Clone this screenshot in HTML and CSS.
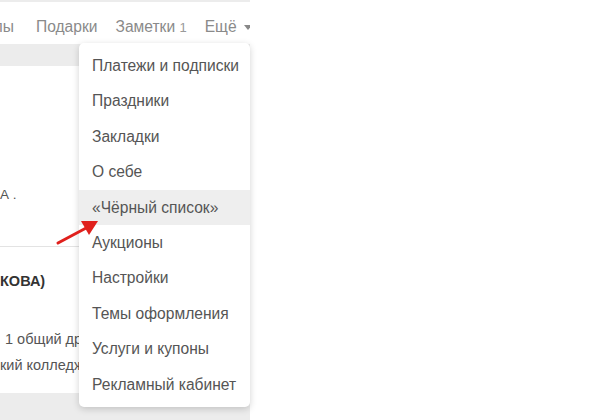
FILE: index.html
```
<!DOCTYPE html>
<html lang="ru">
<head>
<meta charset="utf-8">
<link rel="stylesheet" href="styles.css">
</head>
<body>
<div class="page">
  <nav class="nav">
    <a class="nav-item first">Группы</a>
    <a class="nav-item">Подарки</a>
    <a class="nav-item">Заметки <span class="count">1</span></a>
    <a class="nav-item more">Ещё <span class="caret"></span></a>
  </nav>
  <div class="card">
    <div class="block top">
      <div class="line name-a">А .</div>
    </div>
    <div class="block bottom">
      <div class="line bold">КОВА)</div>
      <div class="line info friends">1 общий друг</div>
      <div class="line info">кий колледж</div>
    </div>
  </div>
</div>

<ul class="menu">
  <li class="menu-item">Платежи и подписки</li>
  <li class="menu-item">Праздники</li>
  <li class="menu-item">Закладки</li>
  <li class="menu-item">О себе</li>
  <li class="menu-item active">«Чёрный список»</li>
  <li class="menu-item">Аукционы</li>
  <li class="menu-item">Настройки</li>
  <li class="menu-item">Темы оформления</li>
  <li class="menu-item">Услуги и купоны</li>
  <li class="menu-item">Рекламный кабинет</li>
</ul>

<svg class="arrow" width="60" height="40" viewBox="0 0 60 40">
  <line x1="6" y1="32" x2="36" y2="16" stroke="#e0201c" stroke-width="3" stroke-linecap="round"/>
  <polygon points="46,10 29,10 37,24" fill="#e0201c"/>
</svg>
</body>
</html>
```
FILE: styles.css
```
html, body {
  margin: 0;
  padding: 0;
  background: #fff;
  width: 600px;
  height: 420px;
  overflow: hidden;
  font-family: "Liberation Sans", Arial, sans-serif;
}

.page {
  width: 250px;
  height: 420px;
  background: #ececec;
  overflow: hidden;
  padding-top: 2px;
  box-sizing: border-box;
}

.nav {
  height: 42px;
  background: #fff;
  display: flex;
  align-items: center;
  padding-top: 7px;
  box-sizing: border-box;
  white-space: nowrap;
  font-size: 15.6px;
  color: #8a8a8a;
}

.nav-item {
  margin-right: 18px;
  flex: none;
}

.nav-item.first {
  margin-left: -38px;
  margin-right: 22px;
}

.count {
  font-size: 13px;
  color: #9a9a9a;
}

.nav-item.more {
  margin-right: 0;
  display: flex;
  align-items: center;
}

.caret {
  display: inline-block;
  width: 0;
  height: 0;
  margin-left: 7px;
  margin-top: 2px;
  border-left: 4px solid transparent;
  border-right: 4px solid transparent;
  border-top: 5px solid #888;
}

.card {
  margin-top: 22px;
  background: #fff;
  height: 327px;
  box-sizing: border-box;
}

.block.top {
  padding-top: 119px;
  padding-bottom: 41px;
  border-bottom: 1px solid #e3e3e3;
}

.line {
  line-height: 20px;
  font-size: 14.5px;
  color: #444;
  white-space: nowrap;
}

.name-a {
  font-size: 13.5px;
  color: #555;
}

.block.bottom {
  padding-top: 24px;
}

.bold {
  font-weight: bold;
  color: #333;
}

.info {
  color: #555;
  margin-top: 6px;
}

.info.friends {
  margin-top: 38px;
  padding-left: 5px;
}

.menu {
  position: absolute;
  left: 79px;
  top: 43px;
  width: 171px;
  margin: 0;
  padding: 5px 0;
  list-style: none;
  background: #fff;
  border-radius: 5px;
  box-shadow: 0 2px 7px rgba(0, 0, 0, 0.18);
}

.menu-item {
  height: 35.4px;
  line-height: 35.4px;
  padding-left: 13px;
  font-size: 15.6px;
  color: #555;
  white-space: nowrap;
}

.menu-item.active {
  background: #eeeeee;
}

.arrow {
  position: absolute;
  left: 52px;
  top: 211px;
}
```
